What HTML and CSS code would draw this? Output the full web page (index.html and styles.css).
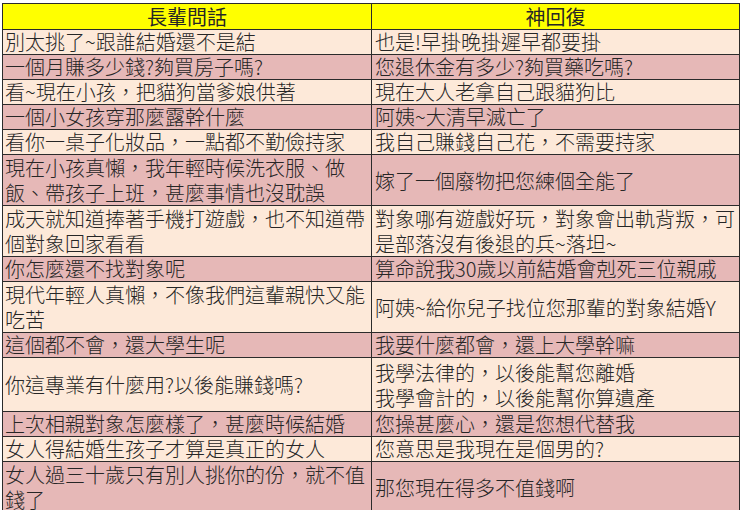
FILE: index.html
```html
<!DOCTYPE html>
<html lang="zh-Hant">
<head>
<meta charset="utf-8">
<title>長輩問話 神回復</title>
<link rel="stylesheet" href="styles.css">
</head>
<body>
<table class="sheet">
  <colgroup><col class="c-left"><col class="c-right"></colgroup>
  <thead>
    <tr class="head"><th>長輩問話</th><th>神回復</th></tr>
  </thead>
  <tbody>
    <tr class="light"><td>別太挑了~跟誰結婚還不是結</td><td>也是!早掛晚掛遲早都要掛</td></tr>
    <tr class="dark"><td>一個月賺多少錢?夠買房子嗎?</td><td>您退休金有多少?夠買藥吃嗎?</td></tr>
    <tr class="light"><td>看~現在小孩，把貓狗當爹娘供著</td><td>現在大人老拿自己跟貓狗比</td></tr>
    <tr class="dark"><td>一個小女孩穿那麼露幹什麼</td><td>阿姨~大清早滅亡了</td></tr>
    <tr class="light"><td>看你一桌子化妝品，一點都不勤儉持家</td><td>我自己賺錢自己花，不需要持家</td></tr>
    <tr class="dark two"><td>現在小孩真懶，我年輕時候洗衣服、做<br>飯、帶孩子上班，甚麼事情也沒耽誤</td><td>嫁了一個廢物把您練個全能了</td></tr>
    <tr class="light two"><td>成天就知道捧著手機打遊戲，也不知道帶<br>個對象回家看看</td><td>對象哪有遊戲好玩，對象會出軌背叛，可<br>是部落沒有後退的兵~落坦~</td></tr>
    <tr class="dark"><td>你怎麼還不找對象呢</td><td>算命說我30歲以前結婚會剋死三位親戚</td></tr>
    <tr class="light two"><td>現代年輕人真懶，不像我們這輩親快又能<br>吃苦</td><td>阿姨~給你兒子找位您那輩的對象結婚Y</td></tr>
    <tr class="dark"><td>這個都不會，還大學生呢</td><td>我要什麼都會，還上大學幹嘛</td></tr>
    <tr class="light two tall"><td>你這專業有什麼用?以後能賺錢嗎?</td><td>我學法律的，以後能幫您離婚<br>我學會計的，以後能幫你算遺產</td></tr>
    <tr class="dark"><td>上次相親對象怎麼樣了，甚麼時候結婚</td><td>您操甚麼心，還是您想代替我</td></tr>
    <tr class="light"><td>女人得結婚生孩子才算是真正的女人</td><td>您意思是我現在是個男的?</td></tr>
    <tr class="dark two"><td>女人過三十歲只有別人挑你的份，就不值<br>錢了</td><td>那您現在得多不值錢啊</td></tr>
  </tbody>
</table>
</body>
</html>
```
FILE: styles.css
```css
html, body {
  margin: 0;
  padding: 0;
  background: #ffffff;
}
body {
  padding: 3px 0 0 2px;
  font-family: "Noto Sans CJK TC", "Noto Sans CJK SC", sans-serif;
  color: #262626;
}
.sheet {
  border-collapse: collapse;
  table-layout: fixed;
  width: 737px;
  font-size: 20px;
}
.c-left { width: 369px; }
.c-right { width: 368px; }
.sheet th,
.sheet td {
  border: 1px solid #2b2b2b;
  padding: 0 0 0 3px;
  line-height: 24px;
  height: 24px;
  vertical-align: middle;
  text-align: left;
  white-space: nowrap;
  font-weight: 300;
}
.sheet td:first-child { padding-left: 2px; }
.head th {
  background: #ffff00;
  text-align: center;
  font-weight: 400;
  height: 25px;
  line-height: 25px;
  padding: 0;
}
.light td { background: #fde9d9; }
.dark td { background: #e6b8b7; }
.two td {
  line-height: 25px;
  height: 50px;
}
.tall td { height: 53px; }
```
